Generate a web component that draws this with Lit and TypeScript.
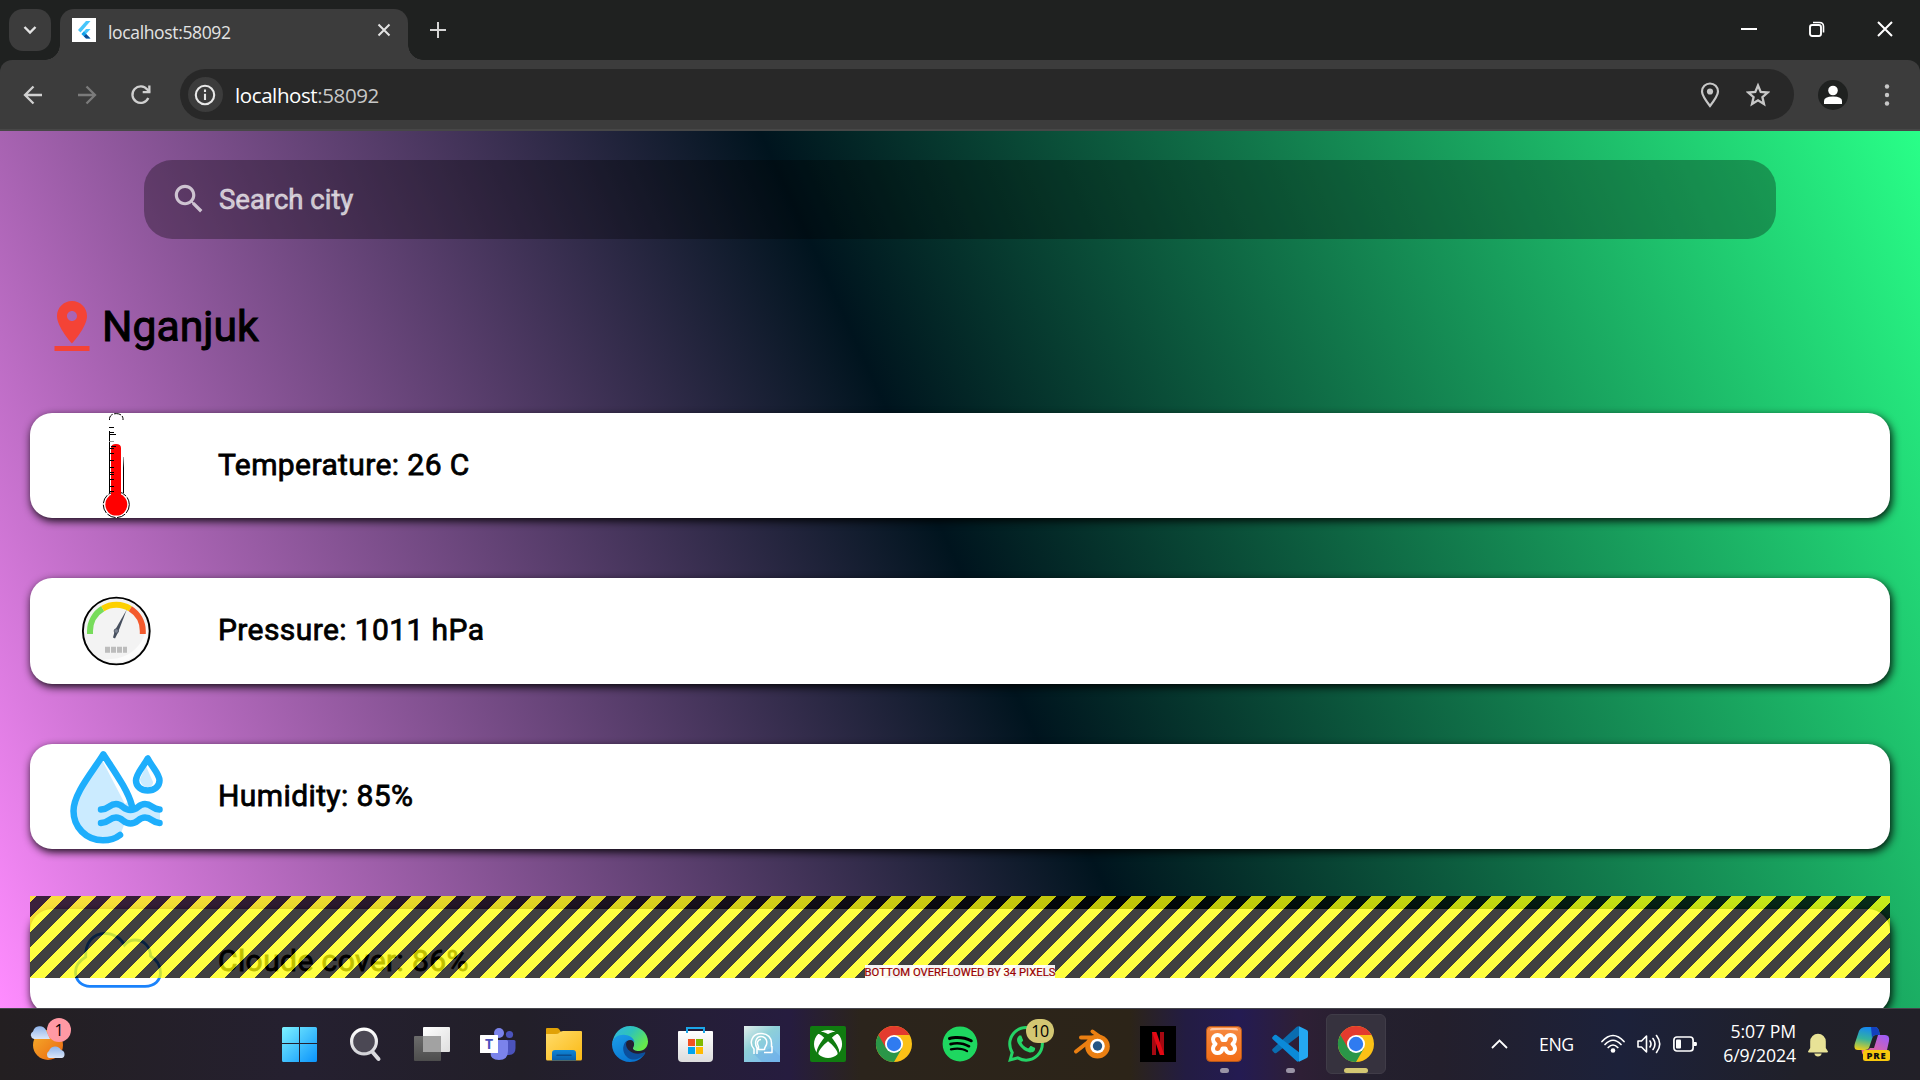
import { LitElement, html, css, svg } from "lit";
import { customElement } from "lit/decorators.js";

const thermometer = svg`
  <defs><linearGradient id="tl" x1="0" y1="0" x2="0" y2="1"><stop offset="0" stop-color="#aaa"/><stop offset=".3" stop-color="#000"/></linearGradient></defs>
  <g fill="none" stroke="#000" stroke-width="1">
    <path d="M41.500 7V5.500C42 2 45 .600 48.300.600S54.600 2 55 5.500V7" stroke-dasharray="7 1.500"/>
    <path d="M41.500 18V80"/>
    <path d="M41 14.500h5M41 19.500h5M41 21.500h7M41 35.500h5M41 40.500h5M41 47.500h5M41 54.500h5M41 59.500h5M41 61.500h5M41 66.500h5M41 73.500h5M41 78.500h5"/>
    <path d="M41 28.500h5" stroke="#999"/>
    <circle cx="48.300" cy="91.600" r="13" stroke-dasharray="9 1.500"/>
  </g>
  <rect x="55" y="44" width="1" height="36" fill="url(#tl)"/>
  <path d="M43 84V35q0-4 5-4t5 4v49z" fill="#f00"/>
  <circle cx="48.300" cy="91.600" r="11" fill="#f00"/>
  <path d="M43 33.500h5M43 35.500h3M43 40.500h3M43 47.500h3M43 54.500h3M43 59.500h3M43 61.500h3M43 66.500h3M43 73.500h3M43 78.500h3" stroke="#000"/>`;

const gauge = svg`
  <circle cx="48.300" cy="53" r="33.400" fill="#f3f3f3" stroke="#000" stroke-width="1.900"/>
  <path d="M79 47a31 31 0 0 1-44 34c20 2 40-8 44-34z" fill="#fcfcfc"/>
  <g fill="none" stroke-width="6">
    <path d="M22 56V53A26.300 26.300 0 0 1 34.700 30.600" stroke="#77dc5b"/>
    <path d="M34.700 30.600A26.300 26.300 0 0 1 62.300 30.800" stroke="#fdd000"/>
    <path d="M62.300 30.800A26.300 26.300 0 0 1 74.800 53V56" stroke="#f35a2d"/>
  </g>
  <path d="M58.800 31.500L50 54.500 47 60.500 45 59.500 47 52z" fill="#464f5e"/>
  <circle cx="48.300" cy="53" r="2.200" fill="#7a8290" stroke="#464f5e" stroke-width=".8"/>
  <path d="M37 71.700h22" stroke="#bcbcbc" stroke-width="6" stroke-dasharray="5 1"/>`;

const humidity = svg`
  <path d="M35 10C25 27 6 48 6 67c0 16 13 29 29 29 8 0 14-3 18-7l3-8 6-2 15-6 15 4V65L77 60 64 65z" fill="#cbebff"/>
  <path d="M34 16L38 14 62 56 57 60z" fill="#fff"/>
  <path d="M79.700 14C74 24 68 30 68 36.500c0 6 5 11 11.700 11s12-5 12-11C91.700 30 85 24 79.700 14z" fill="#fff"/>
  <path d="M78 22L85 38c0 4-3 6-7 5-3-1-6-4-6-8z" fill="#cbebff"/>
  <g fill="none" stroke="#1eaefc" stroke-width="6.500" stroke-linecap="round" stroke-linejoin="round">
    <path d="M52 91c-5 4-11 5.300-17 5.300C18 96.300 5.500 83 5.500 67 5.500 49 26 26 35.300 10.300 46 27 60 46 64 62"/>
    <path d="M79.700 14.500C74 24.500 68 30 68 36.500c0 6 5 10 11.700 10s11.800-4 11.800-10C91.500 30 85 24.500 79.700 14.500z"/>
    <path d="M33 65.500C41 65.500 41 60 48 60S55 66 62.500 66 70 60 77 60 84 65.500 91.500 65.500"/>
    <path d="M33 79C41 79 41 73.500 48 73.500S55 79.500 62.500 79.500 70 73.500 77 73.500 84 79 91.500 79"/>
  </g>`;

const cloud = svg`
  <path d="M22 77.300H77C87 77.300 92.500 71 92.500 63.500 92.500 56 89 51 82.500 47 82.500 38 76 31 67 31 62 31 59 33 56.500 36 53 29 45 24.300 37 24.300 25 24.300 17 34 17.700 48 11 52 7.500 57 7.500 63 7.500 72 14 77.300 22 77.300z" fill="none" stroke="#1a82fb" stroke-width="2.800"/>`;

const readings = [
  { art: thermometer, label: "Temperature: 26 C" },
  { art: gauge, label: "Pressure: 1011 hPa" },
  { art: humidity, label: "Humidity: 85%" },
  { art: cloud, label: "Cloude cover: 86%" },
];

const chromeLogo = svg`
  <circle cx="18" cy="18" r="18" fill="#fbc116"/>
  <path d="M18 18L2.410 9A18 18 0 0 0 18 36L25.800 22.500z" fill="#2a9648"/>
  <path d="M2.410 9A18 18 0 0 1 33.600 9H18L10.200 22.500z" fill="#e33b2e"/>
  <circle cx="18" cy="18" r="9" fill="#fff"/>
  <circle cx="18" cy="18" r="7.200" fill="#2f7bf0"/>`;

const winLogo = svg`
  <defs><linearGradient id="w" x1="0" y1="0" x2="1" y2="1"><stop offset="0" stop-color="#7df2ff"/><stop offset="1" stop-color="#0a93fb"/></linearGradient></defs>
  <path d="M1.500 1H17V17H0V2.500Q0 1 1.500 1zM18 1H33.500Q35 1 35 2.500V17H18zM0 18H17V36H1.500Q0 36 0 34.500zM18 18H35V34.500Q35 36 33.500 36H18z" fill="url(#w)"/>`;

const magnifier = svg`
  <defs><linearGradient id="m" x1="0" y1="0" x2="0" y2="1"><stop offset="0" stop-color="#fff"/><stop offset="1" stop-color="#d3d3d8"/></linearGradient></defs>
  <path d="M24.500 26L30.500 33" stroke="#dadade" stroke-width="4" stroke-linecap="round"/>
  <circle cx="16" cy="15.500" r="12.400" fill="#4b4854" stroke="url(#m)" stroke-width="3.200"/>`;

const taskView = svg`
  <defs><linearGradient id="t" x1="0" y1="0" x2="1" y2="1"><stop offset="0" stop-color="#fff"/><stop offset="1" stop-color="#dedede"/></linearGradient>
  <linearGradient id="t2" x1="0" y1="0" x2="0" y2="1"><stop offset="0" stop-color="#6b6b6b"/><stop offset="1" stop-color="#4d4d4d"/></linearGradient></defs>
  <rect x="0" y="10" width="27" height="25" rx="1" fill="url(#t2)"/>
  <rect x="9" y="1" width="27" height="25" rx="1" fill="url(#t)"/>
  <path d="M9 10H27V26H9z" fill="#a2a2a2"/>`;

const teams = svg`
  <circle cx="29.500" cy="8.500" r="3.600" fill="#4b53bc"/>
  <path d="M25 14H34Q35.500 14 35.500 15.500V22Q35.500 29 29 29H26z" fill="#4b53bc"/>
  <circle cx="19" cy="7" r="5" fill="#7b83eb"/>
  <path d="M11 14H26.500Q28 14 28 15.500V25Q28 34 19 34T10.500 26z" fill="#7b83eb"/>
  <rect x="0" y="9" width="18" height="18" rx=".5" fill="#fff"/>
  <text x="9" y="23.300" text-anchor="middle" font-family="Open Sans, sans-serif" font-weight="700" font-size="14" fill="#4b53bc">T</text>`;

const folder = svg`
  <defs><linearGradient id="f" x1="0" y1="0" x2="1" y2="1"><stop offset="0" stop-color="#ffdc6b"/><stop offset="1" stop-color="#fbb914"/></linearGradient>
  <linearGradient id="f2" x1="0" y1="0" x2="0" y2="1"><stop offset="0" stop-color="#0e86d8"/><stop offset="1" stop-color="#0a5ea9"/></linearGradient></defs>
  <path d="M0 9V3Q0 2 1 2H11Q12 2 13 3L15 6 11 9z" fill="#e0a106"/>
  <path d="M0 8H10Q12 8 13.500 6.500T17 5H35Q36 5 36 6V33Q36 34.500 34.500 34.500H1.500Q0 34.500 0 33z" fill="url(#f)"/>
  <path d="M6 34.500V27Q6 24 9 24H27Q30 24 30 27V34.500z" fill="url(#f2)"/>
  <path d="M11 29.300H25" stroke="#0a4c8c" stroke-width="1.500" stroke-linecap="round"/>`;

const edge = svg`
  <defs><linearGradient id="e1" x1="0" y1="0" x2="1" y2=".6"><stop offset="0" stop-color="#30b2e8"/><stop offset=".5" stop-color="#2fc4b8"/><stop offset="1" stop-color="#66ea4a"/></linearGradient>
  <linearGradient id="e2" x1="0" y1="0" x2=".6" y2="1"><stop offset="0" stop-color="#1c9ee8"/><stop offset="1" stop-color="#0874d1"/></linearGradient></defs>
  <path d="M.3 17C1.500 7 9 0 18 0 28 0 36 7 36 15.500 36 21 32 25 27 25 23 25 20.500 23.500 21 22 23 19 22.500 14.500 18 12 12 8 3.500 10 .3 17z" fill="url(#e1)"/>
  <path d="M33.300 27C30 32.800 24.500 36 18 36 8 36 0 28 0 18.500 0 12 6 8.800 11.500 8.800 18 8.800 22.500 12.500 22.500 17 22.500 15 18.500 12.500 15 15 9 20 12 32 22 30 27 30 30 29 33.300 27z" fill="url(#e2)"/>
  <path d="M15 14.500C9 19 10 31 20 33.500 26 34 31 30.500 33.300 27 33.500 26.200 33 26 32 26.500 23 30 14 25 14 18z" fill="#0c4f9c"/>`;

const store = svg`
  <defs><linearGradient id="s" x1="0" y1="0" x2="0" y2="1"><stop offset="0" stop-color="#fff"/><stop offset="1" stop-color="#dcdcdc"/></linearGradient></defs>
  <path d="M0 6Q0 5 1 5H34Q35 5 35 6V32Q35 36 31 36H4Q0 36 0 32z" fill="url(#s)"/>
  <path d="M9 7V2H26V7" fill="none" stroke="#1ba6e8" stroke-width="2"/>
  <path d="M10 13h7v7h-7z" fill="#f25022"/><path d="M18 13h7v7h-7z" fill="#7fba00"/>
  <path d="M10 21h7v7h-7z" fill="#00a4ef"/><path d="M18 21h7v7h-7z" fill="#ffb900"/>`;

const headApp = svg`
  <defs><linearGradient id="h" x1="0" y1="0" x2=".8" y2="1"><stop offset="0" stop-color="#e2edea"/><stop offset=".45" stop-color="#8ed0d8"/><stop offset="1" stop-color="#7cbdf2"/></linearGradient></defs>
  <path d="M0 0H36V36H0z" fill="url(#h)"/><path d="M10 28L18 36H36V30L28 22z" fill="#62a4dc" opacity=".35"/>
  <g fill="none" stroke="#fff" stroke-width="1.500" stroke-linejoin="round">
    <path d="M10 28V23C4.500 17 8 7.500 17 7.500 24 7.500 27.500 12 27.500 17V20.500H28V26.500H20"/>
    <path d="M13 28V22C10 17 12 10.500 17 10.500S24.500 16 21.500 20.500Q20.500 22 20.500 23.500H14.500V20.500C12 16 14.500 13.500 17 13.500"/>
  </g>`;

const xbox = svg`
  <rect width="36" height="36" rx="2" fill="#107c10"/>
  <g transform="translate(4 4) scale(1.170)" fill="#fff"><path d="M4.102 21.033C6.211 22.881 8.977 24 12 24c3.026 0 5.789-1.119 7.902-2.967 1.877-1.912-4.316-8.709-7.902-11.417-3.582 2.708-9.779 9.505-7.898 11.417zm11.160-14.406c2.500 2.961 7.484 10.313 6.076 12.912C23.002 17.480 24 14.861 24 12.004c0-3.340-1.365-6.362-3.570-8.536 0 0-.027-.022-.082-.042-.063-.022-.152-.045-.281-.045-.592 0-1.985.434-4.805 3.246zM3.654 3.426c-.057.020-.082.041-.086.042C1.365 5.642 0 8.664 0 12.004c0 2.854.998 5.473 2.661 7.533-1.401-2.605 3.579-9.951 6.080-12.910-2.820-2.813-4.216-3.245-4.806-3.245-.131 0-.223.021-.281.046v-.002zM12 3.551S9.055 1.828 6.755 1.746c-.903-.033-1.454.295-1.521.339C7.379.646 9.659 0 11.984 0H12c2.334 0 4.605.646 6.766 2.085-.068-.046-.615-.372-1.520-.339C14.946 1.828 12 3.545 12 3.545v.006z"/></g>`;

const spotify = svg`
  <circle cx="18" cy="18" r="16" fill="#000"/>
  <path transform="translate(.6 .6) scale(1.450)" fill="#1ed760" d="M12 0C5.400 0 0 5.400 0 12s5.400 12 12 12 12-5.400 12-12S18.660 0 12 0zm5.521 17.340c-.240.359-.660.480-1.021.240-2.820-1.740-6.360-2.101-10.561-1.141-.418.122-.779-.179-.899-.539-.120-.421.180-.780.540-.900 4.560-1.021 8.520-.600 11.640 1.320.420.180.479.659.301 1.020zm1.440-3.300c-.301.420-.841.600-1.262.300-3.239-1.980-8.159-2.580-11.939-1.380-.479.120-1.020-.120-1.140-.600-.120-.480.120-1.021.600-1.141C9.600 9.900 15 10.561 18.720 12.840c.361.181.540.780.241 1.200zm.120-3.360C15.240 8.400 8.820 8.160 5.160 9.301c-.600.179-1.200-.181-1.380-.721-.180-.601.180-1.200.720-1.381 4.260-1.260 11.280-1.020 15.721 1.621.539.300.719 1.020.419 1.560-.299.421-1.020.599-1.559.300z"/>`;

const whatsapp = svg`
  <path transform="scale(1.500)" fill="#25d366" d="M17.472 14.382c-.297-.149-1.758-.867-2.030-.967-.273-.099-.471-.148-.670.150-.197.297-.767.966-.940 1.164-.173.199-.347.223-.644.075-.297-.150-1.255-.463-2.390-1.475-.883-.788-1.480-1.761-1.653-2.059-.173-.297-.018-.458.130-.606.134-.133.298-.347.446-.520.149-.174.198-.298.298-.497.099-.198.050-.371-.025-.520-.075-.149-.669-1.612-.916-2.207-.242-.579-.487-.500-.669-.510-.173-.008-.371-.010-.570-.010-.198 0-.520.074-.792.372-.272.297-1.040 1.016-1.040 2.479 0 1.462 1.065 2.875 1.213 3.074.149.198 2.096 3.200 5.077 4.487.709.306 1.262.489 1.694.625.712.227 1.360.195 1.871.118.571-.085 1.758-.719 2.006-1.413.248-.694.248-1.289.173-1.413-.074-.124-.272-.198-.570-.347m-5.421 7.403h-.004a9.870 9.870 0 0 1-5.031-1.378l-.361-.214-3.741.982.998-3.648-.235-.374a9.860 9.860 0 0 1-1.510-5.260c.001-5.450 4.436-9.884 9.888-9.884 2.640 0 5.122 1.030 6.988 2.898a9.825 9.825 0 0 1 2.893 6.994c-.003 5.450-4.437 9.884-9.885 9.884m8.413-18.297A11.815 11.815 0 0 0 12.050 0C5.495 0 .160 5.335.157 11.892c0 2.096.547 4.142 1.588 5.945L.057 24l6.305-1.654a11.882 11.882 0 0 0 5.683 1.448h.005c6.554 0 11.890-5.335 11.893-11.893a11.821 11.821 0 0 0-3.480-8.413z"/>`;

const blender = svg`
  <g fill="none" stroke="#ea7f12" stroke-width="4" stroke-linecap="round">
    <path d="M7 11.500H22M2 25.500L20 11.500M18.500 5.500L31 14.500"/>
  </g>
  <ellipse cx="23.500" cy="20.500" rx="12.300" ry="12" fill="#ea7f12"/>
  <circle cx="23.500" cy="20" r="7.300" fill="#fff"/><circle cx="23.500" cy="20" r="4.700" fill="#245584"/>`;

const netflix = svg`
  <rect width="36" height="36" fill="#000"/>
  <rect x="12" y="6" width="4" height="23" fill="#a60811"/><rect x="20" y="6" width="4" height="23" fill="#a60811"/>
  <rect x="12" y="6" width="4.400" height="23" fill="#e50914" transform="translate(-2.100 0) skewX(19)"/>`;

const xampp = svg`
  <defs><linearGradient id="xa" x1="0" y1="0" x2="0" y2="1"><stop offset="0" stop-color="#f68a42"/><stop offset="1" stop-color="#f26d17"/></linearGradient></defs>
  <rect x=".5" y=".5" width="35" height="35" rx="4" fill="url(#xa)" stroke="#b4571a"/>
  <path d="M4 4.500Q4 2 6.500 2H29.500Q32 2 32 4.500 18 3 4 4.500z" fill="#ffc9a3"/>
  <path d="M18 14H16.500C16 10.500 14 9 11.500 9 8.500 9 7 11 7 13.200S8.300 17 9.500 18C8.300 19 7 20.500 7 23S9 27 11.500 27 16 25 16.500 22.500H19.500C20 25 22 27 24.500 27S29 25.500 29 23 27.700 19 26.500 18C27.700 17 29 15.500 29 13.200S27.500 9 24.500 9 20 10.500 19.500 14z" fill="none" stroke="#fff" stroke-width="4" stroke-linejoin="round"/>`;

const vscode = svg`
  <g transform="scale(1.500)">
    <path d="M7.040 9.130L16.500.500Q17.200 0 18 .200V6.550L2.920 18Q2.200 18.400 1.650 17.940L.330 16.740Q-.200 16 .330 15.260z" fill="#0a6db0"/>
    <path d="M.330 7.260L1.650 6.060Q2.300 5.600 2.920 6L18 17.450V23.500Q17 24 16.500 23.500L.330 8.740Q-.200 8 .330 7.260z" fill="#0b8ad8"/>
    <path d="M18 .150L23.150 2.590Q24 3 24 3.940V20.060Q24 21 23.150 21.410L18 23.850z" fill="#24a8f2"/>
  </g>`;

const apps = [
  { art: winLogo }, { art: magnifier }, { art: taskView }, { art: teams }, { art: folder },
  { art: edge }, { art: store }, { art: headApp }, { art: xbox }, { art: chromeLogo },
  { art: spotify }, { art: whatsapp, badge: "10" }, { art: blender }, { art: netflix },
  { art: xampp, open: true }, { art: vscode, open: true }, { art: chromeLogo, active: true },
] as Array<{ art: unknown; badge?: string; open?: boolean; active?: boolean }>;

@customElement("browser-chrome")
class BrowserChrome extends LitElement {
  static styles = css`
    :host { display: block; height: 131px; background: #1f2120; font-family: "Open Sans", "Noto Sans", sans-serif; color: #e3e3e3; }
    svg { display: block; flex: none; }
    .strip { display: flex; height: 60px; }
    .menu { width: 42px; height: 42px; margin: 9px 9px 0; border-radius: 14px; background: #3c3c3c; display: grid; place-items: center; }
    .tab { position: relative; box-sizing: border-box; width: 348px; height: 51px; margin-top: 9px; padding: 0 17px 9px 12px; border-radius: 14px 14px 0 0; background: #3c3c3c; display: flex; align-items: center; }
    .tab::before, .tab::after { content: ""; position: absolute; bottom: 0; width: 15px; height: 15px; }
    .tab::before { left: -15px; background: radial-gradient(circle at 0 0, transparent 14.500px, #3c3c3c 15px); }
    .tab::after { right: -15px; background: radial-gradient(circle at 100% 0, transparent 14.500px, #3c3c3c 15px); }
    .title { flex: 1; margin-left: 12px; font-size: 17.500px; letter-spacing: -0.350px; line-height: 24px; padding-top: 3px; }
    .plus { margin: 22px 0 0 22px; }
    .controls { margin-left: auto; display: flex; gap: 52px; padding: 21px 27px 0 0; }
    .bar { box-sizing: border-box; height: 71px; padding: 9px 0 9px; border-bottom: 2px solid #474747; border-radius: 12px 12px 0 0; background: #3c3c3c; display: flex; align-items: center; }
    .nav { display: flex; gap: 30px; margin-left: 21px; width: 159px; }
    .omni { width: 1614px; height: 51px; border-radius: 26px; background: #282828; display: flex; align-items: center; box-sizing: border-box; padding: 0 24px 0 8px; }
    .info { width: 35px; height: 35px; border-radius: 50%; background: #3c3c3c; display: grid; place-items: center start; padding-left: 0; }
    .info svg { margin-left: 6px; }
    .url { flex: 1; margin-left: 12px; font-size: 20.500px; letter-spacing: -0.400px; color: #c7c7c7; }
    .host { color: #fff; }
    .marks { display: flex; gap: 24px; }
    .avatar { width: 30px; height: 30px; margin-left: 24px; }
    .dots { margin-left: 36px; }
  `;
  render() {
    return html`
      <div class="strip">
        <div class="menu"><svg width="14" height="10" viewBox="0 0 14 10"><path d="M1.500 2L7 7.500 12.500 2" fill="none" stroke="#e3e3e3" stroke-width="2.400"/></svg></div>
        <div class="tab">
          <svg width="24" height="24" viewBox="0 0 24 24"><path d="M0 0H24V24H0z" fill="#fff"/><path d="M14 3H18.500L8.500 14.500 6 12z" fill="#47c5fb"/><path d="M14 11H18.500L14 16 18.500 20.500H14L9.500 16z" fill="#47c5fb"/><path d="M9.500 16L11.800 13.600 14.200 16 11.800 18.300z" fill="#10a0ea"/><path d="M11.800 18.300L14.200 16 18.500 20.500H14z" fill="#0b4a96"/></svg>
          <span class="title">localhost:58092</span>
          <svg width="14" height="14" viewBox="0 0 14 14"><path d="M1.500 1.500L12.500 12.500M12.500 1.500L1.500 12.500" stroke="#e3e3e3" stroke-width="2"/></svg>
        </div>
        <svg class="plus" width="16" height="16" viewBox="0 0 16 16"><path d="M8 0V16M0 8H16" stroke="#d5d5d5" stroke-width="2"/></svg>
        <div class="controls">
          <svg width="16" height="16" viewBox="0 0 16 16"><path d="M0 8H16" stroke="#fff" stroke-width="2"/></svg>
          <svg width="16" height="16" viewBox="0 0 16 16"><rect x="1" y="4" width="11" height="11" rx="2.200" fill="none" stroke="#fff" stroke-width="1.900"/><path d="M4 1.500H10.500Q14.500 1.500 14.500 5.500V11.500" fill="none" stroke="#fff" stroke-width="1.600"/></svg>
          <svg width="16" height="16" viewBox="0 0 16 16"><path d="M1 1L15 15M15 1L1 15" stroke="#fff" stroke-width="2"/></svg>
        </div>
      </div>
      <div class="bar">
        <div class="nav">
          <svg width="24" height="24" viewBox="0 0 24 24"><path d="M21 12H4.500M12.500 3.500L4 12l8.500 8.500" fill="none" stroke="#d0d0d0" stroke-width="2.300"/></svg>
          <svg width="24" height="24" viewBox="0 0 24 24"><path d="M3 12H19.500M11.500 3.500L20 12l-8.500 8.500" fill="none" stroke="#7b7b7b" stroke-width="2.300"/></svg>
          <svg width="24" height="24" viewBox="0 0 24 24"><path d="M19.300 15A8.300 8.300 0 1 1 18.300 6.500L20.500 9" fill="none" stroke="#d0d0d0" stroke-width="2.300"/><path d="M21.500 2.500V10.300H13.700V8H19.200V2.500z" fill="#d0d0d0"/></svg>
        </div>
        <div class="omni">
          <div class="info"><svg width="22" height="22" viewBox="0 0 22 22"><circle cx="11" cy="11" r="9.200" fill="none" stroke="#e8e8e8" stroke-width="2.100"/><path d="M11 9.800V16M11 5.500V8" stroke="#e8e8e8" stroke-width="2.100"/></svg></div>
          <span class="url"><span class="host">localhost</span>:58092</span>
          <div class="marks">
            <svg width="24" height="26" viewBox="0 0 24 26"><path d="M12 24C7 17.500 4 13.500 4 9.500A8 8 0 0 1 20 9.500C20 13.500 17 17.500 12 24z" fill="none" stroke="#c7c7c7" stroke-width="2.200"/><circle cx="12" cy="9.500" r="3.100" fill="#c7c7c7"/></svg>
            <svg width="24" height="26" viewBox="0 0 24 24"><path d="M12 2.500L14.700 8.900 21.700 9.500 16.400 14.100 18 21 12 17.300 6 21 7.600 14.100 2.300 9.500 9.300 8.900z" fill="none" stroke="#c7c7c7" stroke-width="2.300"/></svg>
          </div>
        </div>
        <svg class="avatar" viewBox="0 0 30 30"><circle cx="15" cy="15" r="15" fill="#1f2120"/><circle cx="15" cy="10.500" r="4.800" fill="#fff"/><path d="M6 24V21Q6 16.500 15 16.500T24 21V24z" fill="#fff"/></svg>
        <svg class="dots" width="6" height="22" viewBox="0 0 6 22"><circle cx="3" cy="2.500" r="2.200" fill="#c7c7c7"/><circle cx="3" cy="11" r="2.200" fill="#c7c7c7"/><circle cx="3" cy="19.500" r="2.200" fill="#c7c7c7"/></svg>
      </div>`;
  }
}

@customElement("weather-page")
class WeatherPage extends LitElement {
  static styles = css`
    :host { display: block; position: relative; box-sizing: border-box; height: 877px; overflow: hidden; padding: 29px 30px 0; font-family: Roboto, sans-serif; color: #000;
      background: linear-gradient(245.450deg, #29ff88 0%, #00141e 50%, #ff8cff 100%); }
    svg { display: block; flex: none; }
    .search { box-sizing: border-box; height: 79px; margin: 0 114px; padding-left: 26px; border-radius: 28px; background: rgba(0, 0, 0, 0.310); display: flex; align-items: center; gap: 11px; font-size: 27.500px; color: rgba(255, 255, 255, 0.700); -webkit-text-stroke: 1px rgba(255, 255, 255, 0.500); }
    .search svg { margin-bottom: 1px; }
    .place { display: flex; align-items: center; height: 60px; margin: 57px 0 57px 12px; font-size: 42.700px; -webkit-text-stroke: 1px #000; }
    .cards { display: flex; flex-direction: column; gap: 60px; }
    .card { height: 105.330px; box-sizing: border-box; padding-left: 38px; border-radius: 22px; background: #fff; display: flex; align-items: center; gap: 54px; font-size: 30px; letter-spacing: 0.400px; line-height: 36px; -webkit-text-stroke: 0.800px #000; box-shadow: 1.500px 3px 8px rgba(0, 0, 0, 0.900); }
    .label { padding-bottom: 1px; }
    .overflow { position: absolute; left: 30px; right: 30px; top: 765px; height: 82px; display: flex; align-items: flex-end; justify-content: center;
      background: repeating-linear-gradient(135deg, rgba(255,255,0,.75) 0, rgba(255,255,0,.75) 4.400px, rgba(0,0,0,.75) 4.400px, rgba(0,0,0,.75) 15.010px, rgba(255,255,0,.75) 15.010px, rgba(255,255,0,.75) 21.213px); }
    .note { box-sizing: border-box; height: 13px; background: rgba(255,255,255,.940); color: #900; font-size: 11.250px; line-height: 15px; -webkit-text-stroke: 0.200px #900; white-space: nowrap; }
  `;
  render() {
    return html`
      <div class="search">
        <svg width="38" height="38" viewBox="0 0 24 24"><path fill="rgba(255,255,255,.7)" stroke="none" d="M15.500 14h-.790l-.280-.270C15.410 12.590 16 11.110 16 9.500 16 5.910 13.090 3 9.500 3S3 5.910 3 9.500 5.910 16 9.500 16c1.610 0 3.090-.590 4.230-1.570l.270.280v.790l5 4.990L20.490 19l-4.990-5zm-6 0C7.010 14 5 11.990 5 9.500S7.010 5 9.500 5 14 7.010 14 9.500 11.990 14 9.500 14z"/></svg>
        <span>Search city</span>
      </div>
      <div class="place">
        <svg width="60" height="60" viewBox="0 0 24 24"><path fill="#f44336" stroke="none" d="M18 8c0-3.310-2.690-6-6-6S6 4.690 6 8c0 4.500 6 11 6 11s6-6.500 6-11zm-8 0c0-1.100.900-2 2-2s2 .900 2 2-.890 2-2 2c-1.100 0-2-.900-2-2zM5 20v2h14v-2H5z"/></svg>
        <span>Nganjuk</span>
      </div>
      <div class="cards">
        ${readings.map((r) => html`<div class="card"><svg width="96" height="105" viewBox="0 0 96 105">${r.art}</svg><span class="label">${r.label}</span></div>`)}
      </div>
      <div class="overflow"><span class="note">BOTTOM OVERFLOWED BY 34 PIXELS</span></div>`;
  }
}

@customElement("task-bar")
class TaskBar extends LitElement {
  static styles = css`
    :host { box-sizing: border-box; height: 72px; border-top: 1px solid #45454b; display: flex; align-items: flex-start; font-family: "Open Sans", "Noto Sans", sans-serif; font-size: 17.700px; color: #fff;
      background: linear-gradient(90deg, #231f21 0, #252030 300px, #221f29 520px, #251e38 700px, #261c3f 790px, #2b241c 860px, #2c2418 1130px, #231c42 1185px, #241b52 1240px, #2e1f35 1300px, #24202e 1370px, #231f2c 1440px, #1c213a 1620px, #202029 1800px, #222028 1920px); }
    svg { display: block; flex: none; }
    .weather { position: relative; width: 40px; height: 36px; margin: 17px 212px 0 30px; }
    .count { position: absolute; left: 17px; top: -8px; width: 24px; height: 24px; border-radius: 50%; background: #ff99a4; color: #000; font-size: 16px; line-height: 24px; text-align: center; }
    .apps { display: flex; gap: 30px; }
    .app { position: relative; width: 36px; height: 71px; }
    .app svg { position: relative; margin-top: 17px; overflow: visible; }
    .badge { position: absolute; left: 18px; top: 10px; width: 28px; height: 24px; border-radius: 12px; background: #d3c773; color: #000; font-size: 16px; line-height: 24px; text-align: center; letter-spacing: -.5px; }
    .tile { position: absolute; left: -12px; top: 5px; width: 58px; height: 58px; border: 1px solid #403c48; border-radius: 6px; background: #36323e; }
    .mark { position: absolute; left: 13.500px; top: 59px; width: 9px; height: 5px; border-radius: 3px; background: #9a94a6; }
    .mark.on { left: 6px; width: 24px; background: #d3c773; }
    .tray { display: flex; align-items: center; height: 70px; margin-left: auto; padding-right: 30px; }
    .lang { margin: 0 28px 0 31px; width: 34px; letter-spacing: -0.450px; }
    .state { display: flex; gap: 12px; }
    .clock { width: 99px; text-align: right; line-height: 24px; letter-spacing: -0.100px; margin-top: -2px; }
    .bell { margin: 1px 26px 0 12px; }
  `;
  render() {
    return html`
      <div class="weather">
        <svg width="36" height="36" viewBox="0 0 36 36">
          <defs><linearGradient id="sun" x1="0" y1="0" x2="1" y2="1"><stop offset="0" stop-color="#f6b02c"/><stop offset="1" stop-color="#ea6510"/></linearGradient>
          <linearGradient id="cl" x1="0" y1="0" x2="0" y2="1"><stop offset="0" stop-color="#8fb4ea"/><stop offset="1" stop-color="#dbe6f8"/></linearGradient></defs>
          <circle cx="18" cy="19" r="15" fill="url(#sun)"/>
          <path d="M4 13A4 4 0 0 1 3 5.500 7 7 0 0 1 16 4L20 13z" fill="url(#cl)"/>
          <path d="M19 32A4 4 0 0 1 19 25 6.500 6.500 0 0 1 31 24 4.200 4.200 0 0 1 32 32z" fill="url(#cl)"/>
        </svg>
        <span class="count">1</span>
      </div>
      <div class="apps">
        ${apps.map((a) => html`<div class="app">
          ${a.active ? html`<i class="tile"></i>` : ""}
          <svg width="36" height="36" viewBox="0 0 36 36">${a.art}</svg>
          ${a.badge ? html`<span class="badge">${a.badge}</span>` : ""}
          ${a.open ? html`<i class="mark"></i>` : ""}${a.active ? html`<i class="mark on"></i>` : ""}
        </div>`)}
      </div>
      <div class="tray">
        <svg width="17" height="10" viewBox="0 0 17 10"><path d="M1 9L8.500 1.500 16 9" fill="none" stroke="#fff" stroke-width="1.800"/></svg>
        <span class="lang">ENG</span>
        <div class="state">
          <svg width="24" height="20" viewBox="0 0 24 20"><g fill="none" stroke="#fff" stroke-width="1.700" stroke-linecap="round"><path d="M1 7.500Q12-4.500 23 7.500M4 10.500Q12 2 20 10.500M7.200 13.500Q12 8.500 16.800 13.500"/></g><circle cx="12" cy="16.500" r="2.300" fill="#fff"/></svg>
          <svg width="24" height="20" viewBox="0 0 24 20"><g fill="none" stroke="#fff" stroke-width="1.600" stroke-linecap="round" stroke-linejoin="round"><path d="M1 7H4.500L9.500 2V18L4.500 13H1z"/><path d="M13 7Q15 10 13 13M16 4.500Q20 10 16 15.500M19.500 1.500Q26 10 19.500 18.500"/></g></svg>
          <svg width="24" height="20" viewBox="0 0 24 20"><rect x=".9" y="3" width="19.200" height="14" rx="3" fill="none" stroke="#fff" stroke-width="1.700"/><rect x="3" y="5.500" width="5" height="9" rx="1" fill="#fff"/><path d="M21 8h2q1 0 1 2t-1 2h-2z" fill="#fff"/></svg>
        </div>
        <div class="clock">5:07 PM<br>6/9/2024</div>
        <svg class="bell" width="20" height="24" viewBox="0 0 20 24"><path d="M2.200 15V8.500A7.800 7.800 0 0 1 17.800 8.500V15L20 18.500Q20 19.500 19 19.500H1Q0 19.500 0 18.500zM6.300 20.500H13.700Q13 23.500 10 23.500T6.300 20.500z" fill="#e8e296"/></svg>
        <svg width="36" height="36" viewBox="0 0 36 36">
          <defs><linearGradient id="c1" x1=".4" y1="0" x2=".2" y2="1"><stop offset="0" stop-color="#1688f0"/><stop offset=".5" stop-color="#35b39c"/><stop offset="1" stop-color="#f1cf19"/></linearGradient>
          <linearGradient id="c2" x1=".8" y1="0" x2="0" y2="1"><stop offset="0" stop-color="#a05cf5"/><stop offset="1" stop-color="#fb6a76"/></linearGradient></defs>
          <path d="M12 1H21Q24 1 25 5L26 9H22Q19 9 18 13L15 22Q14 24 11 24H4Q-1 24 1 17L5 5Q7 1 12 1z" fill="url(#c1)"/>
          <path d="M17 1H21Q24 1 25 5L26 9H22Q19 9 18 12z" fill="#1440bd"/>
          <path d="M24 9H31Q36 9 35 15L33 24Q31 30 27 30H12Q8 30 7.500 24H12Q15 24 16 22L20 22Z" fill="url(#c2)"/>
          <rect x="9" y="24" width="27" height="11" rx="2.500" fill="#f8c80e"/>
          <text x="22.500" y="33" text-anchor="middle" font-family="Open Sans, sans-serif" font-weight="800" font-size="9.500" letter-spacing=".8" fill="#111">PRE</text>
        </svg>
      </div>`;
  }
}

@customElement("app-root")
class AppRoot extends LitElement {
  static styles = css`:host { display: flex; flex-direction: column; width: 1920px; height: 1080px; overflow: hidden; }`;
  render() {
    return html`<browser-chrome></browser-chrome><weather-page></weather-page><task-bar></task-bar>`;
  }
}
